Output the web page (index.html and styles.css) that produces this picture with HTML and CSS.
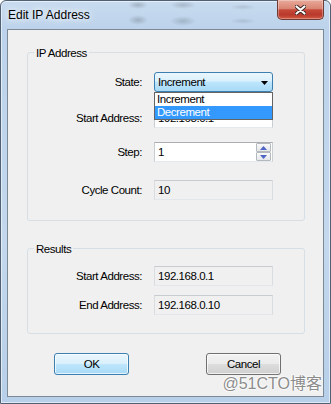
FILE: index.html
```html
<!DOCTYPE html>
<html lang="en">
<head>
    <meta charset="UTF-8">
    <title>Edit IP Address</title>
    <link rel="stylesheet" href="styles.css">
</head>
<body>
    <div class="window">
        <div class="titlebar">
            <span class="title">Edit IP Address</span>
            <button class="close">
                <svg width="11" height="10" viewBox="0 0 11 10">
                    <path d="M1.5 1.5 L9.5 8.5 M9.5 1.5 L1.5 8.5" stroke="#3b2320" stroke-width="4" stroke-linecap="round"/>
                    <path d="M1.5 1.5 L9.5 8.5 M9.5 1.5 L1.5 8.5" stroke="#ffffff" stroke-width="2.2" stroke-linecap="round"/>
                </svg>
            </button>
        </div>

        <div class="client">
            <div class="group group-ip">
                <div class="legend">IP Address</div>
                <div class="rows">
                    <div class="row">
                        <label>State:</label>
                        <div class="combo">
                            <span>Increment</span>
                            <svg class="combo-arrow" width="7" height="4" viewBox="0 0 7 4"><path d="M0 0 H7 L3.5 4 Z" fill="#000"/></svg>
                            <ul class="droplist">
                                <li>Increment</li>
                                <li class="selected">Decrement</li>
                            </ul>
                        </div>
                    </div>
                    <div class="row">
                        <label>Start Address:</label>
                        <div class="field">192.168.0.1</div>
                    </div>
                    <div class="row row-step">
                        <label>Step:</label>
                        <div class="field spin-field">
                            <span class="spin-value">1</span>
                            <div class="spinner">
                                <span class="spin-btn"><svg width="7" height="4" viewBox="0 0 7 4"><path d="M3.5 0 L7 4 H0 Z" fill="#4f66c4"/></svg></span>
                                <span class="spin-btn"><svg width="7" height="4" viewBox="0 0 7 4"><path d="M0 0 H7 L3.5 4 Z" fill="#4f66c4"/></svg></span>
                            </div>
                        </div>
                    </div>
                    <div class="row row-cycle">
                        <label>Cycle Count:</label>
                        <div class="field readonly">10</div>
                    </div>
                </div>
            </div>

            <div class="group group-results">
                <div class="legend">Results</div>
                <div class="rows">
                    <div class="row">
                        <label>Start Address:</label>
                        <div class="field readonly">192.168.0.1</div>
                    </div>
                    <div class="row">
                        <label>End Address:</label>
                        <div class="field readonly">192.168.0.10</div>
                    </div>
                </div>
            </div>

            <div class="buttons">
                <button class="btn btn-default">OK</button>
                <button class="btn">Cancel</button>
            </div>
        </div>

        <div class="watermark">@51CTO博客</div>
    </div>
</body>
</html>
```

FILE: styles.css
```css
* {
    margin: 0;
    padding: 0;
    box-sizing: border-box;
}

body {
    font-family: "Liberation Sans", Arial, sans-serif;
    font-size: 11.5px;
    letter-spacing: -0.45px;
    color: #000;
    background: #fff;
}

.window {
    position: relative;
    width: 331px;
    height: 404px;
    display: flex;
    flex-direction: column;
    padding: 0 6px 6px;
    border: 1px solid #4f6173;
    border-radius: 6px 6px 0 0;
    background: linear-gradient(180deg, #c8dbef 0, #bcd3eb 28px, #c3d8ed 60%, #b7cfe8 100%);
    box-shadow: inset 0 0 0 1px rgba(255, 255, 255, 0.55);
}

.titlebar {
    height: 28px;
    display: flex;
    justify-content: space-between;
    align-items: flex-start;
    background:
        radial-gradient(ellipse 10px 4px at 131px 4px, rgba(95, 105, 115, 0.35), transparent),
        radial-gradient(ellipse 10px 5px at 131px 19px, rgba(95, 105, 115, 0.35), transparent),
        radial-gradient(ellipse 13px 4px at 176px 4px, rgba(95, 105, 115, 0.3), transparent),
        radial-gradient(ellipse 13px 5px at 176px 20px, rgba(95, 105, 115, 0.3), transparent),
        radial-gradient(ellipse 13px 3px at 236px 6px, rgba(95, 105, 115, 0.2), transparent),
        radial-gradient(ellipse 13px 3px at 236px 20px, rgba(95, 105, 115, 0.2), transparent);
}

.title {
    padding: 7px 0 0 1px;
    font-size: 12px;
    line-height: 14px;
    letter-spacing: 0;
    color: #000;
    text-shadow: 0 0 6px #fff, 0 0 10px #fff;
}

.close {
    width: 47px;
    height: 20px;
    margin-top: -1px;
    display: flex;
    align-items: center;
    justify-content: center;
    border: 1px solid #6e3a33;
    border-top: none;
    border-radius: 0 0 5px 5px;
    background: linear-gradient(180deg, #e8aa9b 0%, #da8573 45%, #c6493a 52%, #b9392b 78%, #d35a42 100%);
    box-shadow: inset 0 0 0 1px rgba(255, 255, 255, 0.3);
}

.client {
    flex: 1;
    border: 1px solid #7c8a98;
    background: #f0f0f0;
    padding-top: 22px;
}

.group {
    width: 278px;
    margin-left: 19px;
    border: 1px solid #d5dfe5;
    border-radius: 3px;
}

.group-results {
    margin-top: 27px;
}

.legend {
    width: fit-content;
    height: 14px;
    line-height: 14px;
    margin: -7px 0 0 6px;
    padding: 0 2px;
    background: #f0f0f0;
}

.rows {
    display: flex;
    flex-direction: column;
    gap: 16px;
    padding: 12px 0 20px;
}

.row-step {
    margin-top: -2px;
}

.row-cycle {
    margin-top: 2px;
}

.group-results .rows {
    gap: 9px;
    padding: 10px 0 18px;
}

.row {
    display: grid;
    grid-template-columns: 114px 119px;
    column-gap: 12px;
    align-items: center;
}

.row label {
    text-align: right;
}

.field {
    height: 20px;
    line-height: 18px;
    padding-left: 3px;
    background: #fff;
    border: 1px solid #c9cdd4;
    border-top-color: #abadb3;
    border-bottom-color: #e3e9ef;
    white-space: nowrap;
}

.field.readonly {
    background: #f0f0f0;
    border-color: #c8ccd1 #d9dde2 #e3e7eb;
}

.spin-field {
    display: flex;
    justify-content: space-between;
    padding-right: 1px;
}

.spinner {
    display: flex;
    flex-direction: column;
}

.spin-btn {
    width: 15px;
    height: 9px;
    display: flex;
    align-items: center;
    justify-content: center;
    border: 1px solid #b4b8bf;
    border-radius: 1px;
    background: linear-gradient(180deg, #fafafa, #e4e6ea);
}

.combo {
    position: relative;
    height: 20px;
    display: flex;
    align-items: center;
    justify-content: space-between;
    padding: 0 4px 0 3px;
    border: 1px solid #3c7fb1;
    border-radius: 3px;
    background: linear-gradient(180deg, #eaf6fd 0%, #d9f0fc 45%, #bee6fd 50%, #a7d9f5 100%);
}

.combo-arrow {
    margin-top: 1px;
}

.droplist {
    position: absolute;
    top: 19px;
    left: -1px;
    width: 119px;
    list-style: none;
    background: #fff;
    border: 1px solid #646464;
    z-index: 5;
}

.droplist li {
    height: 13px;
    line-height: 13px;
    padding-left: 2px;
}

.droplist li.selected {
    background: #3399ff;
    color: #fff;
}

.buttons {
    display: flex;
    gap: 77px;
    padding: 19px 0 0 46px;
}

.btn {
    width: 75px;
    height: 22px;
    font-family: inherit;
    font-size: 11.5px;
    letter-spacing: -0.45px;
    color: #000;
    border: 1px solid #707070;
    border-radius: 3px;
    background: linear-gradient(180deg, #f2f2f2 0%, #ebebeb 48%, #dddddd 52%, #cfcfcf 100%);
    box-shadow: inset 0 0 0 1px rgba(255, 255, 255, 0.7);
}

.btn-default {
    border-color: #3c7fb1;
    background: linear-gradient(180deg, #eaf6fd 0%, #d9f0fc 48%, #bee6fd 52%, #a7d9f5 100%);
}

.watermark {
    position: absolute;
    right: 8px;
    bottom: 9px;
    font-size: 16px;
    letter-spacing: 0;
    font-family: "Liberation Sans", "Noto Sans CJK SC", sans-serif;
    color: #8c8c8c;
    text-shadow: 0 0 2px #fff, 0 0 2px #fff, 0 0 3px #fff;
}
```
